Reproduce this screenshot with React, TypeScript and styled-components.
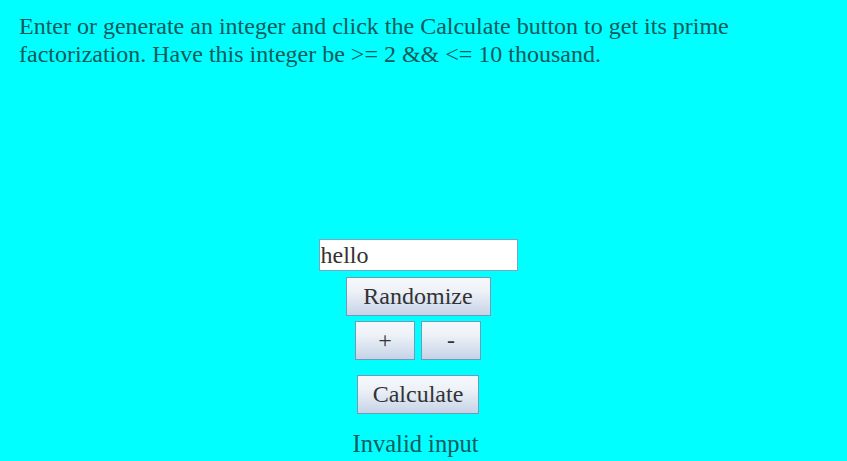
import * as React from "react"
import styled, { createGlobalStyle } from "styled-components"

const GlobalStyle = createGlobalStyle`
  html, body {
    margin: 0;
    padding: 0;
    background: #00ffff;
  }
  body {
    font-family: "Liberation Serif", "Times New Roman", serif;
  }
`

const Page = styled.div`
  width: 847px;
  height: 461px;
  background: #00ffff;
  overflow: hidden;
`

const Intro = styled.p`
  margin: 0;
  max-width: 745px;
  padding: 12px 19px 0 19px;
  color: #0e5a5c;
  font-size: 24px;
  line-height: 28px;
`

const Controls = styled.div`
  display: flex;
  flex-direction: column;
  align-items: center;
  margin-top: 171px;
  padding-right: 11px;
`

const NumberInput = styled.input`
  box-sizing: border-box;
  width: 199px;
  height: 32px;
  margin: 0 0 6px 0;
  padding: 0 1px;
  border: 1px solid #7aa6c2;
  background: #fff;
  color: #333;
  font-family: inherit;
  font-size: 24px;
  outline: none;
`

const Button = styled.button<{ $w: number; $h: number }>`
  box-sizing: border-box;
  width: ${p => p.$w}px;
  height: ${p => p.$h}px;
  padding: 0;
  border: 1px solid #6f9bbb;
  border-radius: 0;
  background: linear-gradient(#f5f7fb 0%, #eef2f8 35%, #c6d3e7 100%);
  color: #333;
  font-family: inherit;
  font-size: 24px;
  cursor: pointer;
`

const StepRow = styled.div`
  display: flex;
  gap: 6px;
  margin: 5px 0 15px 0;
`

const Result = styled.div`
  margin: 16px 5px 0 0;
  color: #0e5a5c;
  font-size: 24.5px;
  line-height: 28px;
`

export default function App() {
  const [value, setValue] = React.useState("hello")
  return (
    <Page>
      <GlobalStyle />
      <Intro>
        Enter or generate an integer and click the Calculate button to get its prime
        factorization. Have this integer be &gt;= 2 &amp;&amp; &lt;= 10 thousand.
      </Intro>
      <Controls>
        <NumberInput value={value} onChange={e => setValue(e.target.value)} />
        <Button $w={145} $h={39}>Randomize</Button>
        <StepRow>
          <Button $w={60} $h={39}>+</Button>
          <Button $w={60} $h={39}>-</Button>
        </StepRow>
        <Button $w={122} $h={39}>Calculate</Button>
        <Result>Invalid input</Result>
      </Controls>
    </Page>
  )
}
